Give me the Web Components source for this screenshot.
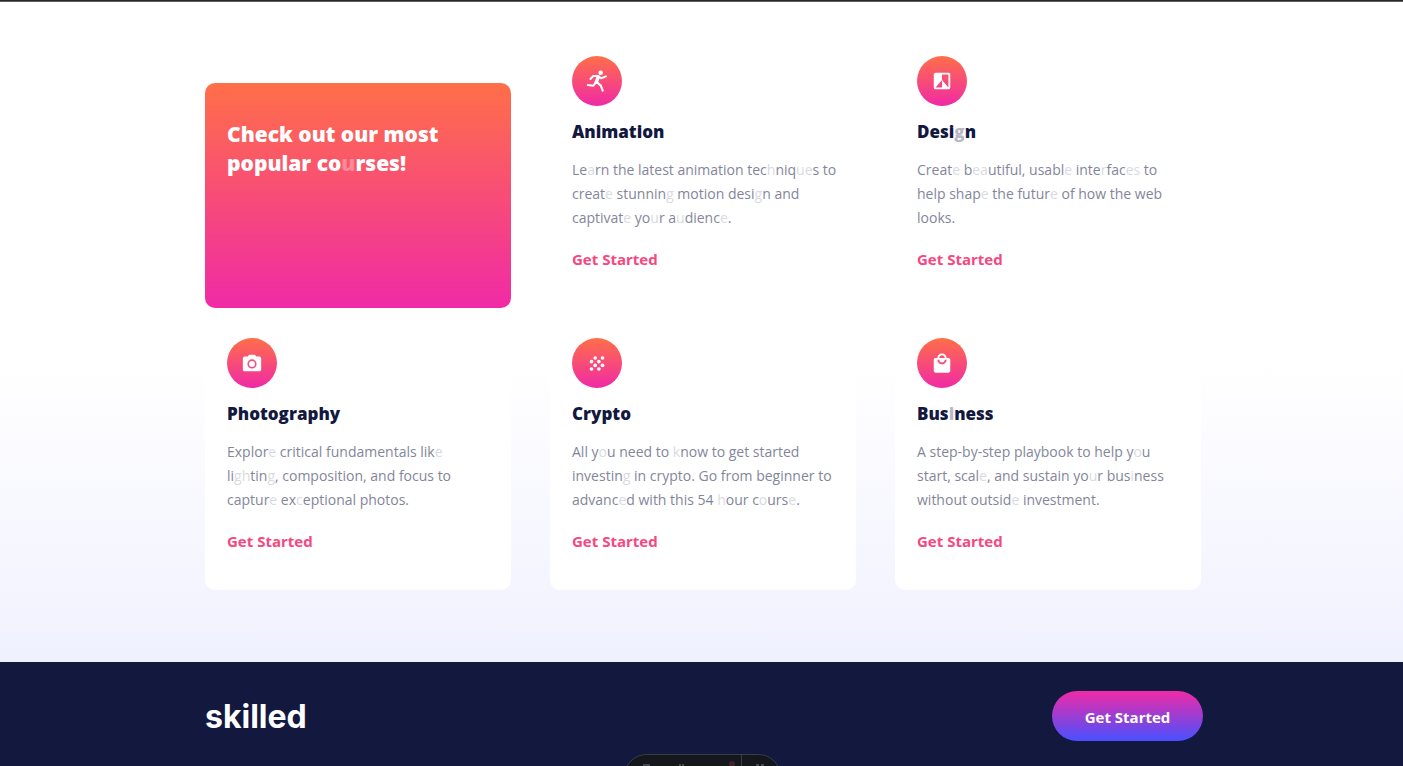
<!DOCTYPE html>
<html lang="en">
<head>
<meta charset="utf-8">
<meta name="viewport" content="width=device-width, initial-scale=1">
<title>Skilled</title>
<style>
  html, body { margin: 0; }
  body {
    --page-left: 205px;
    --page-right: 200px;
    --warm: linear-gradient(180deg, #ff6f48 0%, #f02aa6 100%);
    --navy: #13183f;
    --pink: #f74780;
    font-family: "Open Sans", "Noto Sans", sans-serif;
    color: var(--navy);
    background: var(--navy);
  }
</style>
</head>
<body>
<skilled-page></skilled-page>

<template id="tpl-page">
  <style>
    :host { display: flex; flex-direction: column; min-height: 100vh; overflow: hidden; }
    main {
      box-sizing: border-box;
      flex: 1;
      padding: 81px calc(var(--page-right) + 2px) 72px var(--page-left);
      border-top: 1px solid #2b282b;
      box-shadow: inset 0 1px #5f5c5f;
      background: linear-gradient(180deg, #fff 55%, #f0f1ff 100%);
    }
    .grid { display: grid; grid-template-columns: repeat(3, minmax(0, 1fr)); column-gap: 39px; row-gap: 57px; padding-top: 1px; }
    i { font-style: normal; opacity: .3; }
  </style>
  <main>
    <div class="grid">
      <promo-card>Check out our most popular co<i>u</i>rses!</promo-card>
      <course-card icon="run">
        <span slot="title">Animation</span>
        Le<i>a</i>rn the latest animation tec<i>h</i>niq<i>ue</i>s to<br>creat<i>e</i> stunnin<i>g</i> motion desi<i>g</i>n and<br>captivat<i>e</i> yo<i>u</i>r a<i>u</i>dienc<i>e</i>.
      </course-card>
      <course-card icon="contrast">
        <span slot="title">Desi<i>g</i>n</span>
        Creat<i>e</i> b<i>ea</i>utiful, usabl<i>e</i> inte<i>r</i>fac<i>es</i> to<br>help shap<i>e</i> the futur<i>e</i> of how the web<br>looks.
      </course-card>
      <course-card icon="camera">
        <span slot="title">Photography</span>
        Explor<i>e</i> critical fundamentals lik<i>e</i><br>li<i>gh</i>tin<i>g</i>, composition, and focus to<br>captur<i>e</i> ex<i>c</i>eptional photos.
      </course-card>
      <course-card icon="dots">
        <span slot="title">Crypto</span>
        All y<i>o</i>u need to <i>k</i>now to get started<br>investin<i>g</i> in crypto. Go from beginner to<br>advanc<i>e</i>d with this 54 <i>h</i>our c<i>o</i>urs<i>e</i>.
      </course-card>
      <course-card icon="bag">
        <span slot="title">Bus<i>i</i>ness</span>
        A step-by-step playbook to help y<i>o</i>u<br>start, scal<i>e</i>, and sustain yo<i>u</i>r bus<i>i</i>ness<br>without outsid<i>e</i> investment.
      </course-card>
    </div>
  </main>
  <site-footer></site-footer>
  <recorder-bar></recorder-bar>
</template>

<template id="tpl-promo">
  <style>
    :host { display: block; box-sizing: border-box; min-height: 225px; padding: 37px 22px; border-radius: 10px; background: var(--warm); color: #fff; }
    h2 { max-width: 240px; margin: 0; font-size: 21px; line-height: 29px; font-weight: 800; }
  </style>
  <h2><slot></slot></h2>
</template>

<template id="tpl-course">
  <style>
    :host { display: block; box-sizing: border-box; min-height: 225px; padding: 0 22px; border-radius: 10px; background: #fff; }
    .badge { display: flex; align-items: center; justify-content: center; width: 50px; height: 50px; margin-top: -27px; border-radius: 50%; background: var(--warm); }
    svg { width: 22px; height: 22px; fill: #fff; }
    h3 { margin: 14px 0 0; font-size: 17px; line-height: 24px; font-weight: 800; }
    p { margin: 14px 0 0; font-size: 14px; line-height: 24px; color: #83869a; white-space: nowrap; }
    a { display: inline-block; margin-top: 18px; font-size: 15px; line-height: 22px; font-weight: 700; color: var(--pink); text-decoration: none; }
  </style>
  <div class="badge"></div>
  <h3><slot name="title"></slot></h3>
  <p><slot></slot></p>
  <a href="#start">Get Started</a>
</template>

<template id="tpl-footer">
  <style>
    :host { display: flex; align-items: center; justify-content: space-between; padding: 29px var(--page-right) 25px var(--page-left); background: var(--navy); }
    .logo { padding-top: 2px; font: 700 32px/48px Inter, sans-serif; color: #fff; text-decoration: none; }
    button { width: 151px; height: 50px; padding: 2px 0 0; border: 0; border-radius: 25px; background: linear-gradient(180deg, #f02aa6 0%, #4851ff 100%); color: #fff; font: 700 15px/22px "Open Sans", sans-serif; }
  </style>
  <a class="logo" href="#top">skilled</a>
  <button type="button">Get Started</button>
</template>

<template id="tpl-recorder">
  <style>
    :host { position: absolute; left: 50%; top: 100vh; margin-left: -78px; margin-top: -12px; width: 157px; height: 12px; overflow: hidden; }
    svg { display: block; }
  </style>
  <svg width="157" height="12" viewBox="0 0 157 12" aria-hidden="true">
    <rect x=".5" y=".5" width="156" height="44" rx="22" fill="#14171b" stroke="#3a3d42"/>
    <path d="M117.500 1v11" stroke="#3a3d42"/>
    <path d="M19 11h7M55 11h2M58 11h2M132 11h3M137 11h3" stroke="#48494c" stroke-width="2"/>
    <circle cx="108" cy="10" r="3" fill="#41202f"/>
  </svg>
</template>

<script>
  const stamp = (host, id) => {
    const root = host.attachShadow({ mode: 'open' });
    root.append(document.getElementById(id).content.cloneNode(true));
    return root;
  };
  const ICONS = {
    run: '<circle cx="16" cy="3" r="2.500"/><g fill="none" stroke="#fff" stroke-linecap="round" stroke-linejoin="round"><path stroke-width="2.200" d="M4.800 9.800L8 6.600L13.400 6.500L16.600 9L21.800 7"/><path stroke-width="3.800" d="M13.200 8L11.200 13.400"/><path stroke-width="2.300" d="M10.600 13.500L8 17.200L2 16.400M12 13.500L16.200 17L18.200 22.600"/></g>',
    contrast: '<path fill-rule="evenodd" d="M19 3H5a2 2 0 0 0-2 2v14a2 2 0 0 0 2 2h14a2 2 0 0 0 2-2V5a2 2 0 0 0-2-2zm0 16l-7-8v8H5l7-8V5h7v14z"/>',
    camera: '<path transform="translate(0 1)" fill-rule="evenodd" d="M9 2L7.170 4H4a2 2 0 0 0-2 2v12a2 2 0 0 0 2 2h16a2 2 0 0 0 2-2V6a2 2 0 0 0-2-2h-3.170L15 2H9zm3 15a5 5 0 1 1 0-10 5 5 0 0 1 0 10zm0-1.700a3.300 3.300 0 1 0 0-6.600 3.300 3.300 0 0 0 0 6.600z"/>',
    dots: '<g transform="translate(0 2.500)"><circle cx="10" cy="4" r="2"/><circle cx="18" cy="4" r="2"/><circle cx="6" cy="8" r="2"/><circle cx="14" cy="8" r="2"/><circle cx="10" cy="12" r="2"/><circle cx="18" cy="12" r="2"/><circle cx="6" cy="16" r="2"/><circle cx="14" cy="16" r="2"/></g>',
    bag: '<path transform="translate(0 .5)" fill-rule="evenodd" d="M19 6h-2c0-2.760-2.240-5-5-5S7 3.240 7 6H5c-1.100 0-2 .9-2 2v12c0 1.100.9 2 2 2h14c1.100 0 2-.9 2-2V8c0-1.100-.9-2-2-2zm-7-3c1.660 0 3 1.340 3 3H9c0-1.660 1.340-3 3-3zm0 10c-2.760 0-5-2.240-5-5h2c0 1.660 1.340 3 3 3s3-1.340 3-3h2c0 2.760-2.240 5-5 5z"/>'
  };
  customElements.define('promo-card', class extends HTMLElement {
    constructor() { super(); stamp(this, 'tpl-promo'); }
  });
  customElements.define('course-card', class extends HTMLElement {
    connectedCallback() {
      if (this.shadowRoot) return;
      stamp(this, 'tpl-course').querySelector('.badge').innerHTML =
        `<svg viewBox="0 0 24 24" aria-hidden="true">${ICONS[this.getAttribute('icon')]}</svg>`;
    }
  });
  customElements.define('site-footer', class extends HTMLElement {
    constructor() { super(); stamp(this, 'tpl-footer'); }
  });
  customElements.define('recorder-bar', class extends HTMLElement {
    constructor() { super(); stamp(this, 'tpl-recorder'); }
  });
  customElements.define('skilled-page', class extends HTMLElement {
    constructor() { super(); stamp(this, 'tpl-page'); }
  });
</script>
</body>
</html>
